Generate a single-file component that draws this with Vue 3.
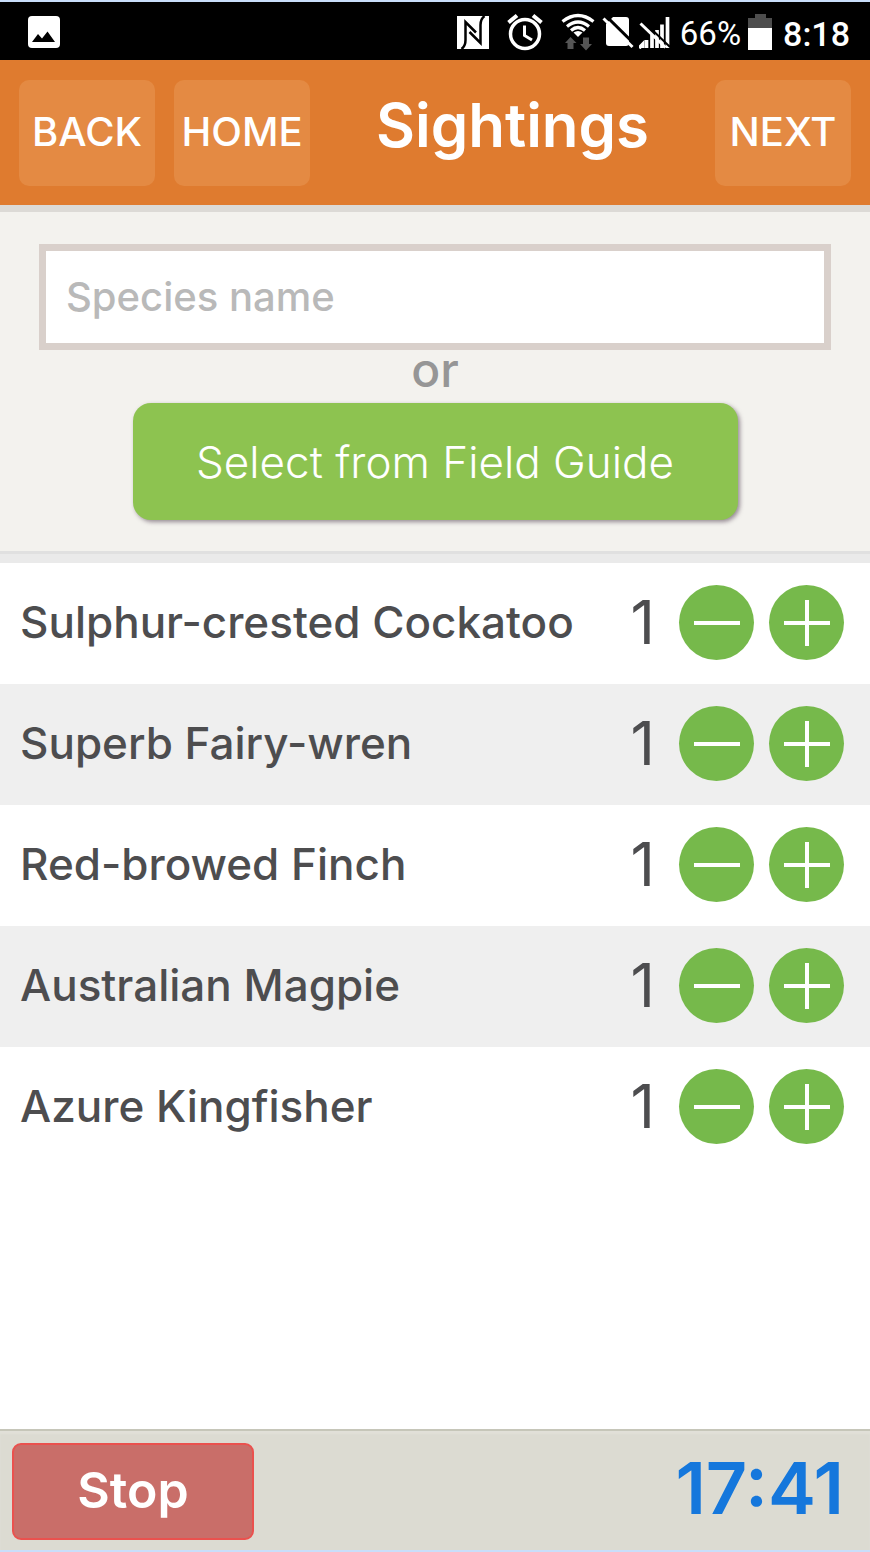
<script setup>
import { ref } from 'vue'

const species = ref('')
const sightings = ref([
  { name: 'Sulphur-crested Cockatoo', count: 1 },
  { name: 'Superb Fairy-wren', count: 1 },
  { name: 'Red-browed Finch', count: 1 },
  { name: 'Australian Magpie', count: 1 },
  { name: 'Azure Kingfisher', count: 1 }
])

function decrease(item) {
  if (item.count > 0) item.count--
}
</script>

<template>
  <div class="screen">
    <div class="status">
      <svg class="picture" width="34" height="34" viewBox="0 0 34 34" aria-hidden="true">
        <rect x="1" y="1" width="32" height="32" rx="4" fill="#fff" />
        <path d="M5 27 L11 19 L15 23.500 L20.500 16.500 L28 27 Z" fill="#000" />
      </svg>
      <div class="indicators">
        <svg class="nfc" width="32" height="34" viewBox="0 0 32 34" aria-hidden="true">
          <rect width="32" height="33" y="1" fill="#fff" />
          <path d="M4.500 34 Q8.500 31 8.500 25 V7 L19 17.500 M27.500 1 Q23.500 4 23.500 10 V28 L12.500 17" fill="none" stroke="#000" stroke-width="2.500" />
        </svg>
        <svg class="alarm" width="36" height="38" viewBox="0 0 36 38" fill="none" stroke="#fff" aria-hidden="true">
          <circle cx="18" cy="21" r="14.500" stroke-width="3.500" />
          <path d="M17.500 12.500 V22.500 L25 27" stroke-width="3" />
          <path d="M1.500 9.500 L10 2.500 M26 2.500 L34.500 9.500" stroke-width="4" />
        </svg>
        <svg class="wifi" width="34" height="38" viewBox="0 0 34 38" fill="none" aria-hidden="true">
          <g stroke="#fff" stroke-width="3.200">
            <path d="M1.500 8.500 Q17 -3.500 32.500 8.500" />
            <path d="M6 13.500 Q17 4.500 28 13.500" />
            <path d="M10 17.500 Q17 11.500 24 17.500" />
          </g>
          <path d="M12.500 19.500 Q17 16.500 21.500 19.500 L17 24 Z" fill="#fff" />
          <path d="M9.500 24 L15.500 30 H12.500 V36 H6.500 V30 H4 Z M22 24.500 H28 V31 H31 L25 37.500 L19 31 H22 Z" fill="#555" />
        </svg>
        <svg class="sim" width="32" height="34" viewBox="0 0 32 34" aria-hidden="true">
          <path d="M4 9 L11 2 H24 Q27 2 27 5 V28 Q27 31 24 31 H7 Q4 31 4 28 Z" fill="#fff" />
          <path d="M4 1 L34 30.500" stroke="#000" stroke-width="3" />
          <path d="M1.500 3.500 L30.500 32" stroke="#fff" stroke-width="3" />
        </svg>
        <svg class="signal" width="32" height="34" viewBox="0 0 32 34" fill="none" stroke="#fff" aria-hidden="true">
          <path d="M0 33 L3.500 29.500 V33 M7.500 25 V33 M13 20 V33 M18 15 V33 M23 9.500 V33 M28.500 2 V33" stroke-width="3.700" />
          <path d="M4.500 6.500 L31 32" stroke="#000" stroke-width="2" />
          <path d="M1.500 8.500 L26.500 32.500" stroke-width="3" />
        </svg>
        <span class="percent">66%</span>
        <svg class="battery" width="24" height="36" viewBox="0 0 24 36" aria-hidden="true">
          <path d="M7 0 H18 V4 H24 V14 H0 V4 H7 Z" fill="#4d4d4d" />
          <rect y="14" width="24" height="22" fill="#fff" />
        </svg>
        <span class="clock">8:18</span>
      </div>
    </div>

    <header class="bar">
      <button type="button" class="nav">BACK</button>
      <button type="button" class="nav">HOME</button>
      <h1>Sightings</h1>
      <button type="button" class="nav">NEXT</button>
    </header>

    <section class="entry">
      <input v-model="species" type="text" placeholder="Species name" aria-label="Species name" />
      <p>or</p>
      <button type="button" class="guide">Select from Field Guide</button>
    </section>

    <ul class="list">
      <li v-for="item in sightings" :key="item.name">
        <span class="name">{{ item.name }}</span>
        <span class="count">{{ item.count }}</span>
        <button type="button" class="round" :aria-label="`Remove one ${item.name}`" @click="decrease(item)">
          <svg width="46" height="46" viewBox="0 0 46 46" aria-hidden="true">
            <path d="M0 23 H46" stroke="#fff" stroke-width="4" />
          </svg>
        </button>
        <button type="button" class="round" :aria-label="`Add one ${item.name}`" @click="item.count++">
          <svg width="46" height="46" viewBox="0 0 46 46" aria-hidden="true">
            <path d="M0 23 H46 M23 0 V46" stroke="#fff" stroke-width="4" />
          </svg>
        </button>
      </li>
    </ul>

    <footer class="timer">
      <button type="button" class="stop">Stop</button>
      <time>17:41</time>
    </footer>
  </div>
</template>

<style>
body {
  margin: 0;
}
</style>

<style scoped>
.screen,
.screen * {
  box-sizing: border-box;
}

.screen {
  display: flex;
  flex-direction: column;
  min-height: 100vh;
  border-top: 2px solid #c9defa;
  border-bottom: 2px solid #c9defa;
  background: #fff;
  font-family: Inter, "Liberation Sans", sans-serif;
}

button,
input {
  margin: 0;
  padding: 0;
  font-family: inherit;
}

button {
  border: 0;
  cursor: pointer;
}

.status {
  display: flex;
  align-items: center;
  justify-content: space-between;
  height: 58px;
  padding: 2px 20px 0 27px;
  background: #000;
  color: #fff;
  font-family: Roboto, sans-serif;
  font-size: 34px;
  line-height: 40px;
}

.indicators {
  display: flex;
  align-items: center;
}

.nfc,
.alarm {
  margin-right: 18px;
}

.wifi {
  margin-right: 7px;
}

.sim {
  margin-right: 5px;
}

.signal {
  margin-right: 9px;
}

.percent {
  margin-right: 7px;
  padding-top: 4px;
  font-size: 33px;
}

.battery {
  margin-right: 11px;
}

.clock {
  padding-top: 4px;
  font-weight: 500;
}

.bar {
  display: flex;
  align-items: center;
  gap: 19px;
  height: 152px;
  padding: 0 19px;
  border-bottom: 7px solid #dcdad6;
  background: #df7b2f;
  color: #fff;
}

.nav {
  width: 136px;
  height: 106px;
  padding-bottom: 2px;
  border-radius: 10px;
  background: #e48a43;
  color: #fff;
  font-size: 40px;
  font-weight: 500;
}

.bar h1 {
  flex: 1;
  margin: 0;
  padding-bottom: 16px;
  font-size: 60px;
  font-weight: 600;
  line-height: 64px;
  text-align: center;
}

.entry {
  display: flex;
  flex-direction: column;
  align-items: center;
  padding: 32px 39px 31px;
  background: #f3f2ee;
}

.entry input {
  width: 100%;
  height: 106px;
  padding: 0 20px 2px;
  border: 7px solid #d9d0cb;
  border-radius: 0;
  background: #fff;
  color: #4d4d4f;
  font-size: 40px;
  font-weight: 500;
}

.entry input::placeholder {
  color: #b9b9b9;
  opacity: 1;
}

.entry p {
  margin: 0;
  padding-bottom: 13px;
  color: #969696;
  font-size: 48px;
  font-weight: 500;
  line-height: 40px;
}

.guide {
  width: 605px;
  max-width: 100%;
  height: 117px;
  border-radius: 18px;
  background: #8dc350;
  box-shadow: 2px 2px 4px rgba(60, 40, 60, 0.5);
  color: #fff;
  font-size: 44px;
  font-weight: 300;
}

.list {
  flex: 1;
  margin: 0;
  padding: 0;
  border-top: 3px solid #e0e0e0;
  list-style: none;
}

.list::before {
  content: "";
  display: block;
  height: 9px;
  background: #eaeaea;
}

.list li {
  display: flex;
  align-items: center;
  height: 121px;
  padding: 0 26px 2px 20px;
  color: #4d4d4f;
}

.list li:nth-child(even) {
  background: #efefef;
}

.name {
  flex: 1;
  padding-bottom: 2px;
  font-size: 44px;
  font-weight: 500;
}

.count {
  margin-right: 24px;
  padding-bottom: 2px;
  font-size: 60px;
  font-weight: 400;
}

.round {
  display: flex;
  align-items: center;
  justify-content: center;
  width: 75px;
  height: 75px;
  border-radius: 50%;
  background: #76b94b;
}

.round + .round {
  margin-left: 15px;
}

.timer {
  display: flex;
  align-items: center;
  justify-content: space-between;
  height: 121px;
  padding: 2px 26px 0 12px;
  border-top: 2px solid #c6c6b9;
  background: #dcdbd2;
  box-shadow: inset 0 3px 2px #e1e0d8;
}

.stop {
  width: 242px;
  height: 97px;
  padding-bottom: 4px;
  border: 2px solid #ea514e;
  border-radius: 9px;
  background: #c96e69;
  color: #fff;
  font-size: 50px;
  font-weight: 600;
}

.timer time {
  padding-bottom: 8px;
  color: #1577dc;
  font-size: 72px;
  font-weight: 600;
}
</style>
